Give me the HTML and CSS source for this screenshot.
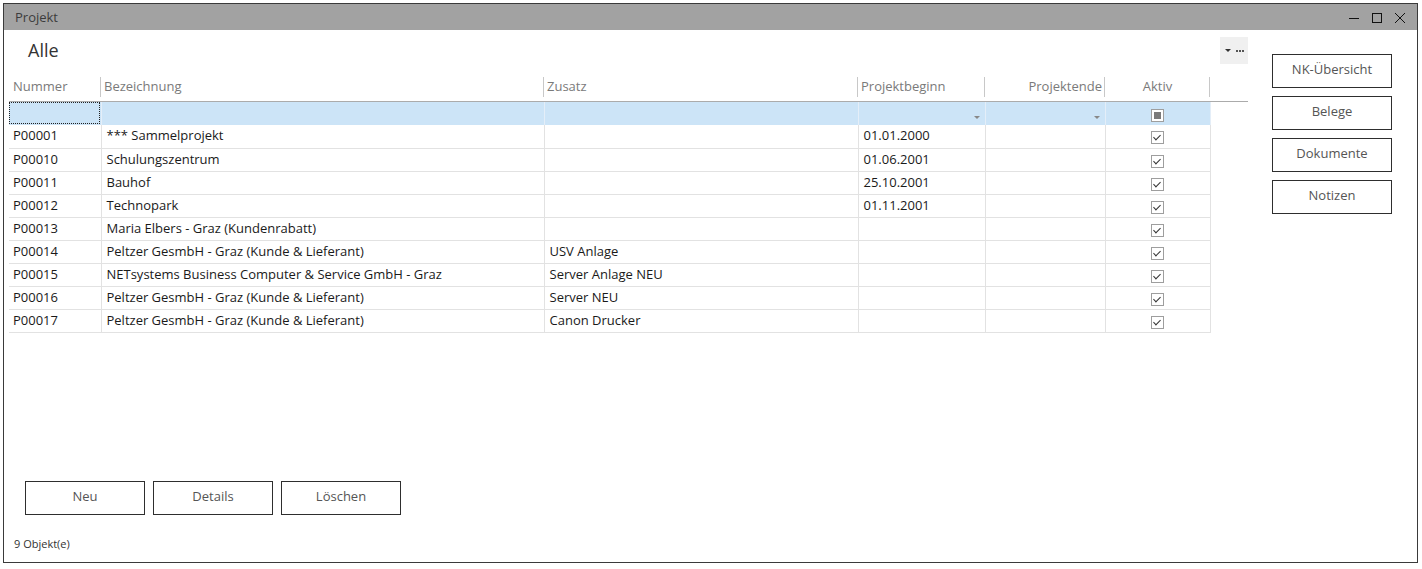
FILE: index.html
```html
<!DOCTYPE html>
<html lang="de">
<head>
<meta charset="utf-8">
<title>Projekt</title>
<link rel="stylesheet" href="styles.css">
</head>
<body>
<div class="window">
  <div class="titlebar">
    <span class="title">Projekt</span>
    <div class="controls">
      <svg width="12" height="12" viewBox="0 0 12 12"><path d="M1 6.5h10" stroke="#111" stroke-width="1"/></svg>
      <svg width="12" height="12" viewBox="0 0 12 12"><rect x="1.5" y="1.5" width="9" height="9" fill="none" stroke="#111" stroke-width="1"/></svg>
      <svg width="12" height="12" viewBox="0 0 12 12"><path d="M1 1l10 10M11 1L1 11" stroke="#111" stroke-width="1"/></svg>
    </div>
  </div>
  <div class="body">
    <div class="main">
      <div class="topbar">
        <span class="view">Alle</span>
        <div class="viewmenu">
          <span class="tri"></span>
          <svg width="8" height="2" viewBox="0 0 8 2"><rect x="0" y="0" width="2" height="2" fill="#555"/><rect x="3" y="0" width="2" height="2" fill="#555"/><rect x="6" y="0" width="2" height="2" fill="#555"/></svg>
        </div>
      </div>
      <table class="grid">
        <colgroup>
          <col class="c1"><col class="c2"><col class="c3"><col class="c4"><col class="c5"><col class="c6"><col class="c7">
        </colgroup>
        <thead>
          <tr>
            <th>Nummer</th><th>Bezeichnung</th><th>Zusatz</th><th>Projektbeginn</th><th class="right">Projektende</th><th class="center">Aktiv</th><th class="nosep"></th>
          </tr>
        </thead>
        <tbody>
          <tr class="filter">
            <td class="focus"><div class="focusbox"></div></td><td></td><td></td>
            <td class="dd"><span class="tri gray"></span></td>
            <td class="dd"><span class="tri gray"></span></td>
            <td class="center"><span class="cb ind"></span></td>
            <td class="blank"></td>
          </tr>
          <tr><td>P00001</td><td>*** Sammelprojekt</td><td></td><td>01.01.2000</td><td></td><td class="center"><span class="cb chk"></span></td><td class="blank"></td></tr>
          <tr><td>P00010</td><td>Schulungszentrum</td><td></td><td>01.06.2001</td><td></td><td class="center"><span class="cb chk"></span></td><td class="blank"></td></tr>
          <tr><td>P00011</td><td>Bauhof</td><td></td><td>25.10.2001</td><td></td><td class="center"><span class="cb chk"></span></td><td class="blank"></td></tr>
          <tr><td>P00012</td><td>Technopark</td><td></td><td>01.11.2001</td><td></td><td class="center"><span class="cb chk"></span></td><td class="blank"></td></tr>
          <tr><td>P00013</td><td>Maria Elbers - Graz (Kundenrabatt)</td><td></td><td></td><td></td><td class="center"><span class="cb chk"></span></td><td class="blank"></td></tr>
          <tr><td>P00014</td><td>Peltzer GesmbH - Graz (Kunde &amp; Lieferant)</td><td>USV Anlage</td><td></td><td></td><td class="center"><span class="cb chk"></span></td><td class="blank"></td></tr>
          <tr><td>P00015</td><td>NETsystems Business Computer &amp; Service GmbH - Graz</td><td>Server Anlage NEU</td><td></td><td></td><td class="center"><span class="cb chk"></span></td><td class="blank"></td></tr>
          <tr><td>P00016</td><td>Peltzer GesmbH - Graz (Kunde &amp; Lieferant)</td><td>Server NEU</td><td></td><td></td><td class="center"><span class="cb chk"></span></td><td class="blank"></td></tr>
          <tr><td>P00017</td><td>Peltzer GesmbH - Graz (Kunde &amp; Lieferant)</td><td>Canon Drucker</td><td></td><td></td><td class="center"><span class="cb chk"></span></td><td class="blank"></td></tr>
        </tbody>
      </table>
      <div class="spacer"></div>
      <div class="actions">
        <button class="btn">Neu</button>
        <button class="btn">Details</button>
        <button class="btn">Löschen</button>
      </div>
      <div class="status">9 Objekt(e)</div>
    </div>
    <div class="side">
      <button class="btn">NK-Übersicht</button>
      <button class="btn">Belege</button>
      <button class="btn">Dokumente</button>
      <button class="btn">Notizen</button>
    </div>
  </div>
</div>
</body>
</html>
```

FILE: styles.css
```css
* { box-sizing: border-box; }
html, body { margin: 0; padding: 0; background: #fff; }
body {
  font-family: "Open Sans", "Noto Sans", sans-serif;
  font-size: 13px;
  color: #1a1a1a;
}
.window {
  margin: 3px 0 0 3px;
  width: 1415px;
  height: 560px;
  border: 1px solid #3a3a3a;
  display: flex;
  flex-direction: column;
}
.titlebar {
  height: 26px;
  background: #a2a2a2;
  display: flex;
  align-items: center;
  justify-content: space-between;
  padding: 0 11px 0 11px;
  flex: none;
}
.title { color: #3c3c3c; font-size: 13px; }
.controls { display: flex; gap: 11px; align-items: center; padding-top: 1px; }
.body { flex: 1; display: flex; min-height: 0; }
.main {
  width: 1244px;
  padding-left: 5px;
  display: flex;
  flex-direction: column;
}
.topbar {
  height: 47px;
  display: flex;
  justify-content: space-between;
  align-items: flex-start;
  flex: none;
}
.view {
  font-size: 18px;
  color: #333;
  margin: 8px 0 0 19px;
  line-height: 24px;
}
.viewmenu {
  margin-top: 7px;
  width: 28px;
  height: 27px;
  background: #f0f0f0;
  display: flex;
  align-items: center;
  justify-content: center;
  gap: 5px;
}
.tri {
  width: 0; height: 0;
  border-left: 3px solid transparent;
  border-right: 3px solid transparent;
  border-top: 3px solid #333;
  display: inline-block;
}
.tri.gray { border-top-color: #888; }
.grid {
  border-collapse: collapse;
  table-layout: fixed;
  width: 1239px;
}
.c1 { width: 92px; } .c2 { width: 443px; } .c3 { width: 314px; }
.c4 { width: 127px; } .c5 { width: 120px; } .c6 { width: 105px; } .c7 { width: 38px; }
th {
  height: 24px;
  font-weight: normal;
  color: #7a7a7a;
  text-align: left;
  padding: 0 3px 6px 3px;
  border-bottom: 1px solid #ababab;
  background: linear-gradient(#c8c8c8, #c8c8c8) right 0 top 0 / 1px 20px no-repeat;
  font-size: 13px;
  line-height: 18px;
  vertical-align: middle;
}
th:first-child { padding-left: 4px; }
th.nosep { background: none; }
.right { text-align: right; }
.center { text-align: center; }
td {
  height: 23px;
  padding: 0 4px 2px 5px;
  border-right: 1px solid #e2e2e2;
  border-bottom: 1px solid #e2e2e2;
  white-space: nowrap;
  overflow: hidden;
  vertical-align: middle;
  line-height: 18px;
}
td:first-child { padding-left: 4px; }
td.blank { border: none; background: #fff; }
.filter td { background: #cce4f7; border-right-color: #e4eef8; border-bottom: none; height: 23px; padding-bottom: 0; }
.filter td.blank { background: #fff; }
.filter td.focus { padding: 0 1px 1px 0; }
.focusbox { height: 22px; border: 1px dotted #222; }
.filter td.dd { text-align: right; padding-right: 5px; }
td.center { text-align: center; padding: 0; }
.cb {
  display: inline-block;
  width: 13px; height: 13px;
  border: 1px solid #9e9e9e;
  background: #fff;
  vertical-align: middle;
  position: relative;
}
.cb.ind::after {
  content: "";
  position: absolute;
  left: 2px; top: 2px;
  width: 7px; height: 7px;
  background: #7a7a7a;
}
.cb.chk::after {
  content: "";
  position: absolute;
  left: 3px; top: 1px;
  width: 3px; height: 6px;
  border-right: 1px solid #333;
  border-bottom: 1px solid #333;
  transform: rotate(45deg);
}
.spacer { flex: 1; }
.actions { display: flex; gap: 8px; padding-left: 16px; }
.btn {
  width: 120px;
  height: 34px;
  background: #fff;
  border: 1px solid #2e2e2e;
  font-family: inherit;
  font-size: 13px;
  color: #555;
  padding: 0 0 4px 0;
  border-radius: 0;
}
.status {
  height: 47px;
  padding: 21px 0 0 5px;
  font-size: 11px;
  line-height: 16px;
  color: #333;
}
.side {
  margin-left: 24px;
  padding-top: 24px;
  display: flex;
  flex-direction: column;
  gap: 8px;
}
.side .btn { height: 34px; }
```
